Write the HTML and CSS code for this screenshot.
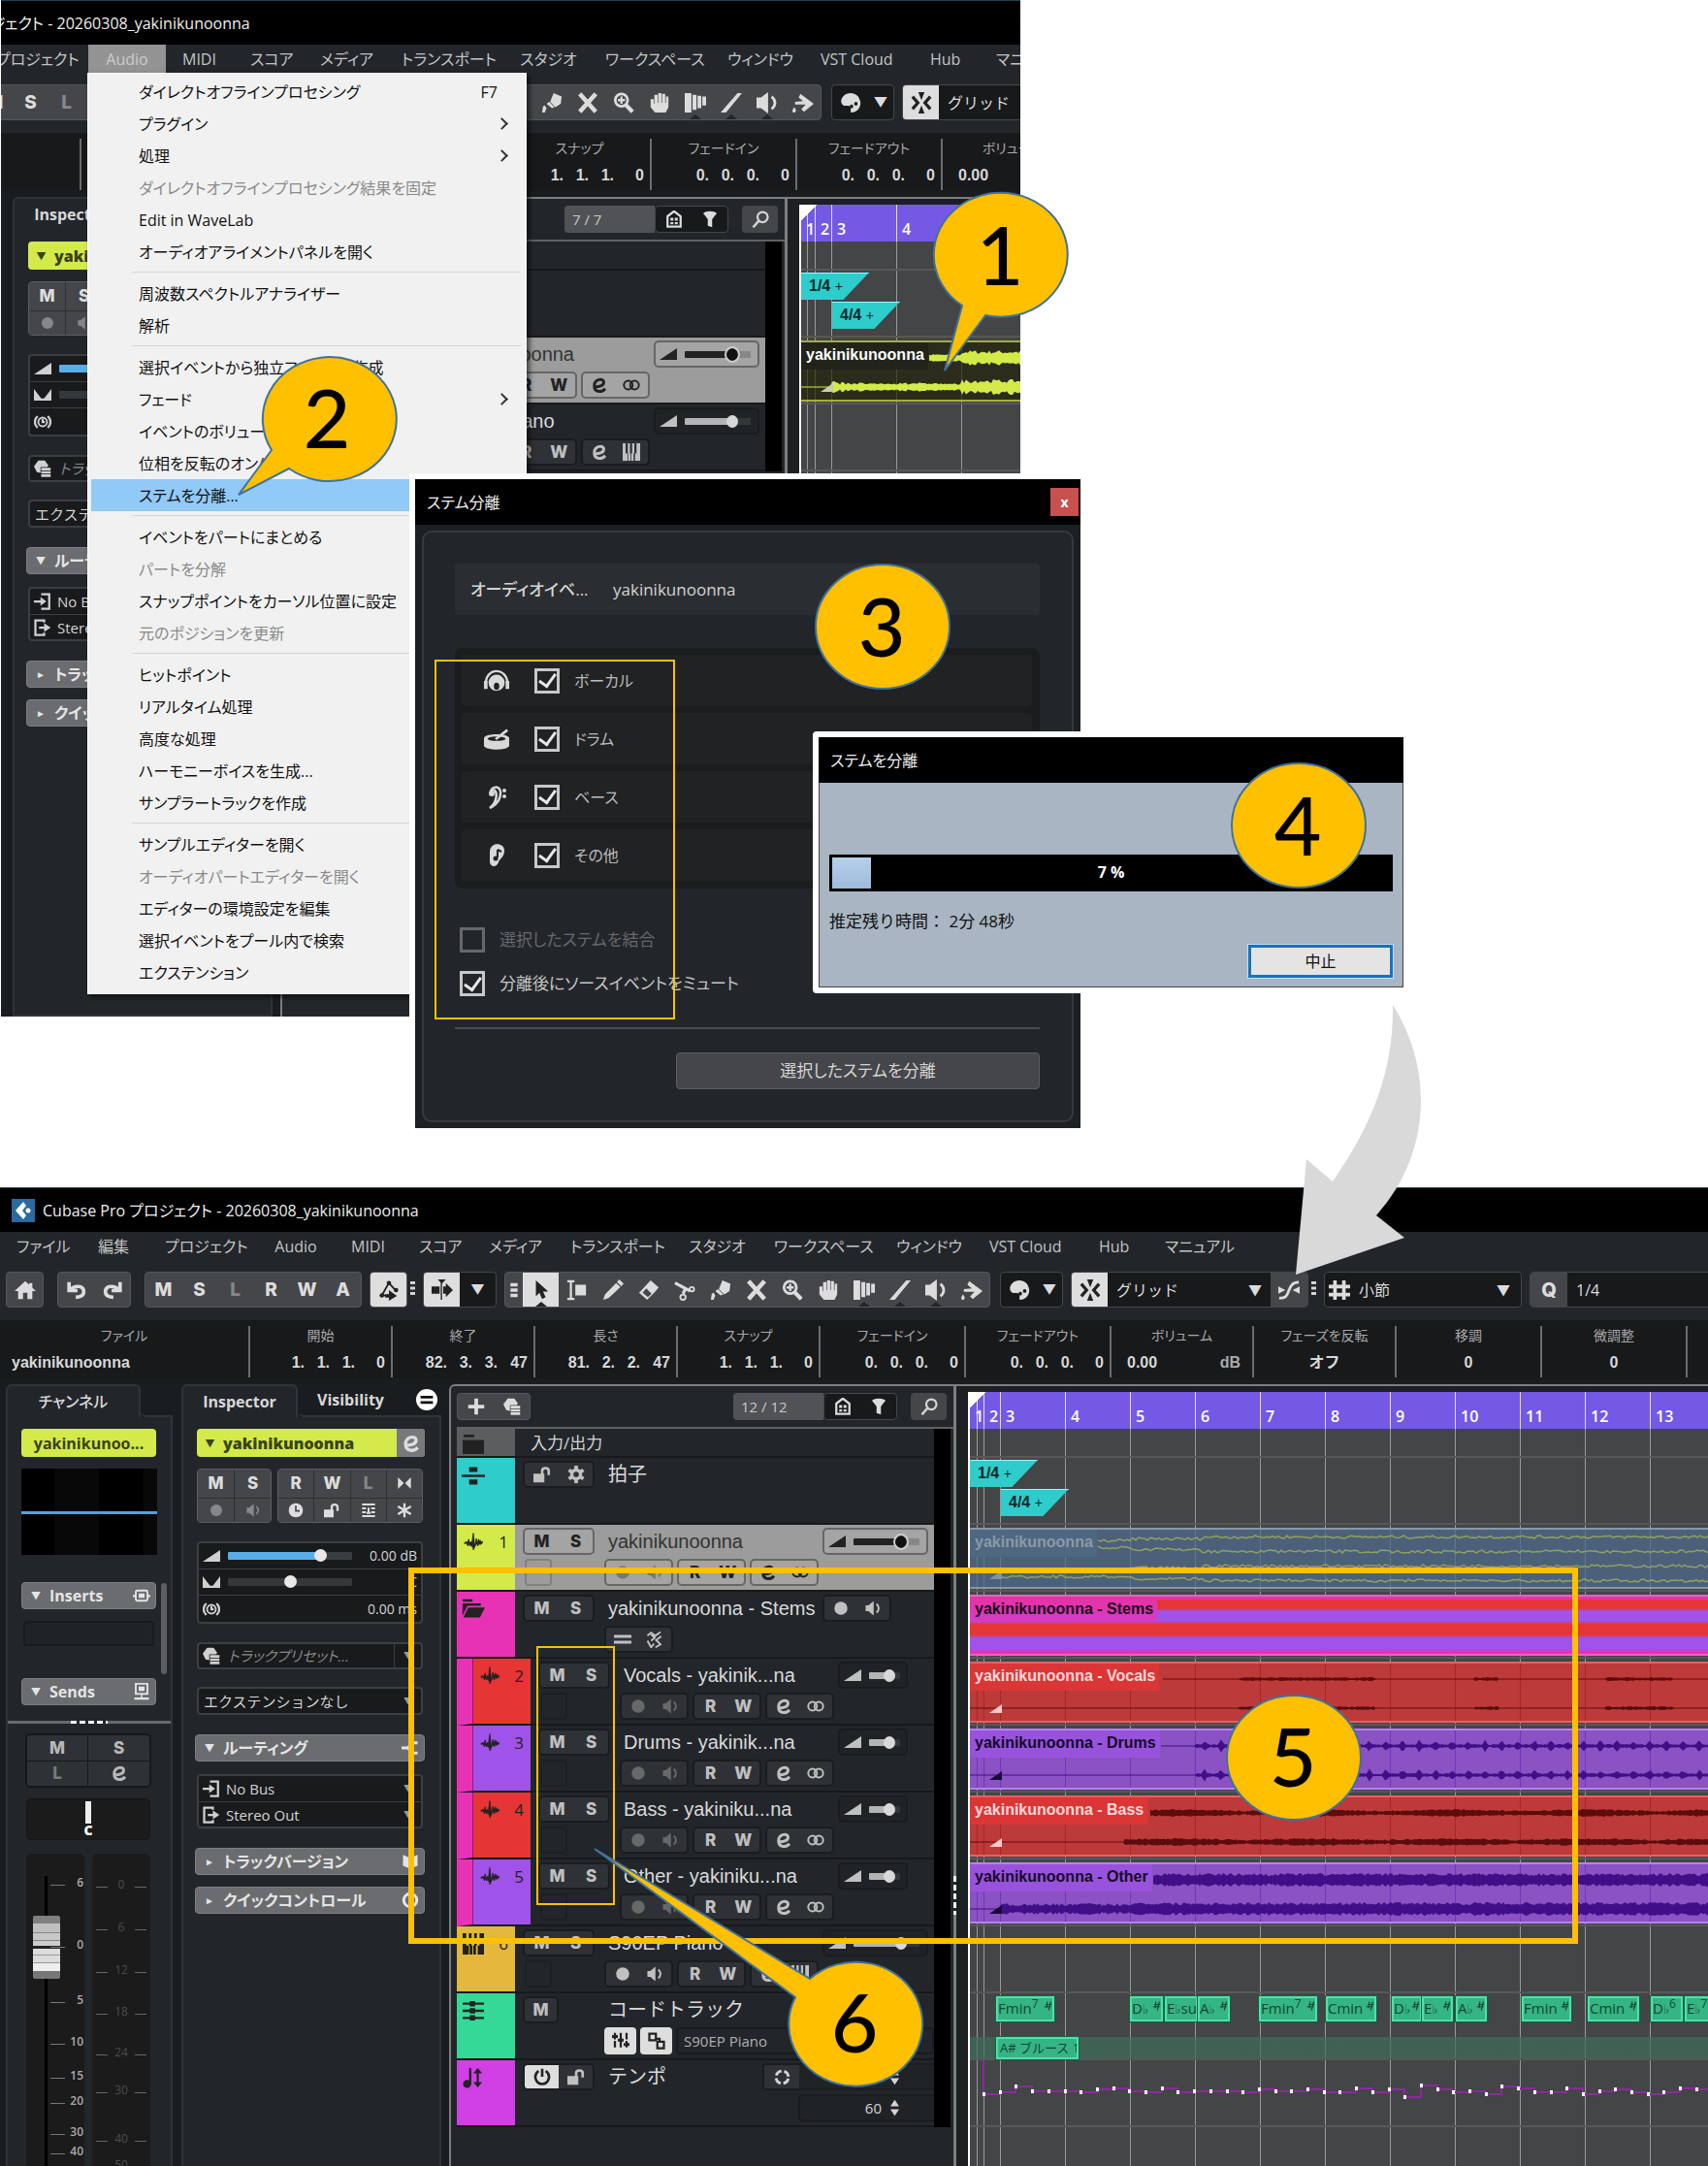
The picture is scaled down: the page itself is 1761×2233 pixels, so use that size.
FILE: index.html
```html
<!DOCTYPE html>
<html lang="ja">
<head>
<meta charset="utf-8">
<title>ステム分離の手順</title>
<link rel="stylesheet" href="styles.css">
<script src="app.js" defer></script>
</head>
<body>
<svg class="defs" aria-hidden="true">
<symbol id="home" viewBox="0 0 24 24"><path d="M12 2 0 13h4v9h5.500v-7h5v7H20v-9h4l-4-3.700V4h-3.500v2z"/></symbol>
<symbol id="undo" viewBox="0 0 24 24"><path d="M3.500 3v9.500H13M5 12C8 7 20 5.500 20 14c0 4-3.500 6-9 6" fill="none" stroke="currentColor" stroke-width="4"/></symbol>
<symbol id="redo" viewBox="0 0 24 24"><path d="M20.500 3v9.500H11M19 12C16 7 4 5.500 4 14c0 4 3.500 6 9 6" fill="none" stroke="currentColor" stroke-width="4"/></symbol>
<symbol id="autom" viewBox="0 0 24 24"><path d="M4 18 12 4l8 9M4 18h7" fill="none" stroke="currentColor" stroke-width="2"/><path d="M12 12l9 6.500-9 5.500v-3.500H8v-4h4z"/><circle cx="12" cy="4" r="2.500"/><circle cx="4" cy="18" r="2.500"/><circle cx="20" cy="12" r="2.500"/></symbol>
<symbol id="scroll" viewBox="0 0 24 24"><path d="M0 8h9v8H0zM13 8h3V4l8 8-8 8v-4h-3zM7 0h9l-4.500 5z"/><path d="M11 3v20" stroke="currentColor" stroke-width="1.500"/></symbol>
<symbol id="dots" viewBox="0 0 6 24"><path d="M0 4h5v3H0zM0 9.500h5v3H0zM0 15h5v3H0z"/></symbol>
<symbol id="grips" viewBox="0 0 10 24"><path d="M1 4h8v4H1zM1 10h8v4H1zM1 16h8v4H1z"/></symbol>
<symbol id="arrow" viewBox="0 0 24 24"><path d="M6 1v18l4-4 3 7 4-2-3-6.500h6z"/></symbol>
<symbol id="range" viewBox="0 0 24 24"><path d="M1 2h8M1 22h8M5 2v20" stroke="currentColor" stroke-width="2.500"/><path d="M10 6h12v12H10z"/></symbol>
<symbol id="pencil" viewBox="0 0 24 24"><path d="M19 0l5 4.500-2.500 3-5-4.500zM15.500 4l5 4.500L7 21l-6 2 2-6z"/></symbol>
<symbol id="eraser" viewBox="0 0 24 24"><path d="M14 1l9 8-4 5-9 9-9-8z"/><path d="M9 10l6 6-4 4-6-5z" fill="#444649"/></symbol>
<symbol id="scissors" viewBox="0 0 24 24"><path d="M1 4l17 9M13 10l-3 6" stroke="currentColor" stroke-width="3.500"/><circle cx="20" cy="11" r="2.500" fill="none" stroke="currentColor" stroke-width="2"/><circle cx="10" cy="20" r="3" fill="none" stroke="currentColor" stroke-width="2"/></symbol>
<symbol id="glue" viewBox="0 0 24 24"><path d="M14 1l9 4-1 8-6 4-6-6zM9 11l6 6-3 1-6-5zM1 23l1-7 2-1 2 3-2 5z"/></symbol>
<symbol id="cross" viewBox="0 0 24 24"><path d="M3 2l18 20M21 2L3 22" stroke="currentColor" stroke-width="5"/></symbol>
<symbol id="zoom" viewBox="0 0 24 24"><circle cx="9.500" cy="9" r="7" fill="none" stroke="currentColor" stroke-width="3"/><path d="M14 14l8 8" stroke="currentColor" stroke-width="4.500"/><path d="M9.500 5v8M5.500 9h8" stroke="currentColor" stroke-width="2.500"/></symbol>
<symbol id="hand" viewBox="0 0 24 24"><path d="M2 8h3.500v5h.7V3h3.600v9h.7V1h3.600v11h.7V2h3.600v10h.7V5H22v12l-3 6H7l-5-6z"/></symbol>
<symbol id="comp" viewBox="0 0 24 24"><path d="M0 1h7.500v22H0zM8.800 3h4.400v17H8.800zM14.400 4h4.200v14h-4.200zM19.800 5H24v10h-4.200z"/></symbol>
<symbol id="line" viewBox="0 0 24 24"><path d="M19 1h5L6 23H0z"/></symbol>
<symbol id="speaker" viewBox="0 0 24 24"><path d="M0 6h5l8-6v24l-8-6H0z"/><path d="M17 5c5 4 5 10 0 14" fill="none" stroke="currentColor" stroke-width="3"/></symbol>
<symbol id="paint" viewBox="0 0 24 24"><path d="M9 2l15 11-11 9-3-3 5-5H3v-3l9-1-5-4zM2 17c3 3 2 6 0 6s-3-2 0-6z"/></symbol>
<symbol id="palette" viewBox="0 0 24 24"><path d="M12 1C3 1-2 11 4 15c3 1 6-1 8 2 1 3-1 5 1 6 6 0 11-6 10-12C22 5 18 1 12 1z"/><circle cx="13" cy="16" r="2" fill="#17191b"/><circle cx="18" cy="13" r="2" fill="#17191b"/></symbol>
<symbol id="snap" viewBox="0 0 24 24"><path d="M2 5l6 7-6 7M22 5l-6 7 6 7" fill="none" stroke="currentColor" stroke-width="3.500"/><path d="M8.500 0h7L12 9zM8.500 24h7L12 15z"/></symbol>
<symbol id="zero" viewBox="0 0 24 24"><path d="M1 21c9 0 9-4 11-9s4-9 11-9" fill="none" stroke="currentColor" stroke-width="3"/><path d="M0 8l8 4-8 4zM24 8l-8 4 8 4z"/></symbol>
<symbol id="hash" viewBox="0 0 24 24"><path d="M7 1v22M17 1v22M0 8h24M0 17h24" stroke="currentColor" stroke-width="4"/></symbol>
<symbol id="menu" viewBox="0 0 24 24"><circle cx="12" cy="12" r="12" fill="#fff"/><path d="M5 9h14M5 15h14" stroke="#111" stroke-width="3"/></symbol>
<symbol id="e" viewBox="0 0 24 24"><path d="M4 14c7 1 14-1 14-6 0-6-13-5-13 5 0 10 11 9 15 4" fill="none" stroke="currentColor" stroke-width="4"/></symbol>
<symbol id="rec" viewBox="0 0 24 24"><circle cx="12" cy="12" r="9"/></symbol>
<symbol id="mon" viewBox="0 0 24 24"><path d="M2 8h4l7-6v20l-7-6H2z"/><path d="M17 6c4 4 4 8 0 12" fill="none" stroke="currentColor" stroke-width="2.500"/></symbol>
<symbol id="bow" viewBox="0 0 24 24"><path d="M2 3l9 9-9 9zM22 3l-9 9 9 9z"/></symbol>
<symbol id="clock" viewBox="0 0 24 24"><circle cx="12" cy="12" r="11"/><path d="M12 5v8h6" fill="none" stroke="#444649" stroke-width="2.500"/></symbol>
<symbol id="lock" viewBox="0 0 24 24"><path d="M0 11h15v12H0z"/><path d="M12 12V7c0-5 9-5 9 0v6" fill="none" stroke="currentColor" stroke-width="3.500"/></symbol>
<symbol id="lanes" viewBox="0 0 24 24"><path d="M2 3h20M2 9h6M16 9h6M2 15h6M16 15h6M2 21h20M12 8v9M9 16h6" stroke="currentColor" stroke-width="3"/></symbol>
<symbol id="star" viewBox="0 0 24 24"><path d="M12 1v22M2 6l20 12M22 6L2 18" stroke="currentColor" stroke-width="3.500"/></symbol>
<symbol id="ramp" viewBox="0 0 24 16"><path d="M0 16 24 0v16z"/></symbol>
<symbol id="pan" viewBox="0 0 24 16"><path d="M0 0l10 13h4L24 0v16H0z"/></symbol>
<symbol id="delay" viewBox="0 0 24 24"><circle cx="12" cy="12" r="6" fill="none" stroke="currentColor" stroke-width="2.500"/><path d="M12 8v4h3M5 4c-5 5-5 11 0 16M19 4c5 5 5 11 0 16" fill="none" stroke="currentColor" stroke-width="3"/></symbol>
<symbol id="preset" viewBox="0 0 24 24"><path d="M6 1h9l5 7-2 2H9v8L4 17 0 9z"/><path d="M10 11h13v3.500H10zM10 15.500h13V19H10zM10 20h13v3.500H10z"/></symbol>
<symbol id="insert" viewBox="0 0 24 24"><rect x="4" y="5" width="16" height="14" rx="2" fill="none" stroke="currentColor" stroke-width="2.500"/><path d="M8 9h8v6H8zM0 11h4v3H0zM20 11h4v3h-4z"/></symbol>
<symbol id="send" viewBox="0 0 24 24"><rect x="4" y="1" width="16" height="14" fill="none" stroke="currentColor" stroke-width="2.500"/><path d="M8 5h8v6H8zM11 15h2v6h-2zM2 20h20v3H2z"/></symbol>
<symbol id="route" viewBox="0 0 24 24"><path d="M0 12h8M22 5h-8L9 12l5 7h8" fill="none" stroke="currentColor" stroke-width="4"/></symbol>
<symbol id="in" viewBox="0 0 24 24"><path d="M10 2h11v20H10M0 12h11" fill="none" stroke="currentColor" stroke-width="3"/><path d="M9 6l8 6-8 6z"/></symbol>
<symbol id="out" viewBox="0 0 24 24"><path d="M14 5V2H2v20h12v-3M7 12h8" fill="none" stroke="currentColor" stroke-width="3"/><path d="M14 6l9 6-9 6z"/></symbol>
<symbol id="plus" viewBox="0 0 24 24"><path d="M12 1v22M1 12h22" stroke="currentColor" stroke-width="5"/></symbol>
<symbol id="cage" viewBox="0 0 24 24"><path d="M3 8l9-7 9 7v14H3z" fill="none" stroke="currentColor" stroke-width="3"/><path d="M7 10h4v4H7zM13 10h4v4h-4zM7 16h4v3H7zM13 16h4v3h-4z"/></symbol>
<symbol id="funnel" viewBox="0 0 24 24"><path d="M3 4l6 8v9l6 2V12l6-8z"/><ellipse cx="12" cy="4" rx="9" ry="3"/></symbol>
<symbol id="search" viewBox="0 0 24 24"><circle cx="15" cy="9" r="7" fill="none" stroke="currentColor" stroke-width="3"/><path d="M10 14l-8 9" stroke="currentColor" stroke-width="3.500"/></symbol>
<symbol id="folder" viewBox="0 0 24 24"><path d="M1 1h12v3H1zM0 7h24v16H0z"/></symbol>
<symbol id="ofolder" viewBox="0 0 28 24"><path d="M1 0h12v3H1zM1 5h22v3H7L1 20zM8 10h20l-6 12H2z"/></symbol>
<symbol id="sig" viewBox="0 0 28 24"><path d="M9 2h10v6H9zM0 11h28v3H0zM9 17h10v6H9z"/></symbol>
<symbol id="wave" viewBox="-1 -2 26 28"><path d="M0 13l3-2 1 2 2-5 1 5 2-2 1 3 2-14 2 17 2-10 1 6 2-5 1 4 1-3 1 3 2-1v2l-3 2-2-1-1 3-2-4-1 3-2 4-1 2-1-7-1 3-1-3-1 2-2-3-1 3-2-4-2 1z" stroke="currentColor"/></symbol>
<symbol id="keys" viewBox="0 0 24 24"><path d="M0 0h4v14h3v10H0zM7 0h3v14h1v10H8V14H7zM13 0h3v14h-1v10h-3V14h1zM19 0h5v24h-7V14h2z"/></symbol>
<symbol id="chord" viewBox="0 0 24 24"><path d="M0 4h24M0 12h24M0 20h24" stroke="currentColor" stroke-width="2.500"/><path d="M8 1h6v6H8zM8 9h6v6H8zM8 17h6v6H8z"/></symbol>
<symbol id="tempo" viewBox="0 0 24 24"><circle cx="5" cy="19" r="4.500"/><path d="M8.500 1v18M17 4v16" stroke="currentColor" stroke-width="2.500"/><path d="M12 7l5-6 5 6zM12 17h10l-5 6z"/></symbol>
<symbol id="gear" viewBox="0 0 24 24"><circle cx="12" cy="12" r="6" fill="none" stroke="currentColor" stroke-width="4.500"/><path d="M12 0v5M12 19v5M2 6l4 2.500M18 15.500l4 2.500M22 6l-4 2.500M6 15.500L2 18" stroke="currentColor" stroke-width="5"/></symbol>
<symbol id="rings" viewBox="0 0 28 24"><circle cx="9" cy="12" r="7" fill="none" stroke="currentColor" stroke-width="3"/><circle cx="19" cy="12" r="7" fill="none" stroke="currentColor" stroke-width="3"/></symbol>
<symbol id="eq" viewBox="0 0 24 24"><path d="M0 6h24v4H0zM0 14h24v4H0z"/></symbol>
<symbol id="zig" viewBox="0 0 24 24"><path d="M2 7l5-4 6 4 7-5M7 14l5-4-5-5M2 14l5 9 4-5M13 23l7-4-6-6 7-5" fill="none" stroke="currentColor" stroke-width="2.500"/></symbol>
<symbol id="mixer" viewBox="0 0 24 24"><path d="M4 1v22M12 1v22M20 1v22" stroke="currentColor" stroke-width="3" stroke-dasharray="9 2"/><path d="M0 4h8v4H0zM8 9h8v4H8zM16 15h8v4h-8z"/></symbol>
<symbol id="link" viewBox="0 0 24 24"><path d="M2 2h9v9H2zM13 13h9v9h-9zM11 9h5v5" fill="none" stroke="currentColor" stroke-width="3"/></symbol>
<symbol id="power" viewBox="0 0 24 24"><path d="M7 4C-1 10 3 22 12 22S25 10 17 4M12 1v11" fill="none" stroke="currentColor" stroke-width="3.500"/></symbol>
<symbol id="target" viewBox="0 0 24 24"><circle cx="12" cy="12" r="9" fill="none" stroke="currentColor" stroke-width="4" stroke-dasharray="10 4.100" stroke-dashoffset="-2"/></symbol>
<symbol id="spin" viewBox="0 0 12 24"><path d="M6 1l6 9H0zM6 23l6-9H0z"/></symbol>
<symbol id="knob" viewBox="0 0 24 24"><circle cx="12" cy="12" r="9" fill="none" stroke="currentColor" stroke-width="4"/></symbol>
<symbol id="ver" viewBox="0 0 24 24"><path d="M2 3l7 3 3 12 3-12 7-3v15l-10 4L2 18z"/></symbol>
<symbol id="mouth" viewBox="0 0 28 24"><path d="M2 20v-7C4-3 24-3 26 13v7" fill="none" stroke="currentColor" stroke-width="2.500"/><path d="M0 12h4v9H0zM24 12h4v9h-4z"/><circle cx="14" cy="14" r="9"/><ellipse cx="14" cy="18" rx="3" ry="4" fill="#202224"/></symbol>
<symbol id="drum" viewBox="0 0 28 24"><path d="M0 11c0-6 28-6 28 0v8c0 6-28 6-28 0z"/><ellipse cx="14" cy="11.500" rx="10" ry="2.500" fill="#202224"/><path d="M13 12L26 2" stroke="currentColor" stroke-width="3"/></symbol>
<symbol id="bass" viewBox="0 0 24 24"><path d="M6 8C5 0 17-1 16 8c0 7-5 12-11 15C15 15 12 2 8 5" fill="none" stroke="currentColor" stroke-width="2.500"/><circle cx="7" cy="8" r="3"/><circle cx="20" cy="5" r="2"/><circle cx="20" cy="11" r="2"/></symbol>
<symbol id="ear" viewBox="0 0 24 24"><path d="M5 8C5-2 20-2 20 7c0 7-5 8-6 12-2 6-9 5-9-1z"/><path d="M13 6v8M13 6l4 2" stroke="#202224" stroke-width="2"/><circle cx="11" cy="15" r="2.500" fill="#202224"/></symbol>
<symbol id="logo" viewBox="0 0 24 24"><path d="M0 0h24v24H0z" fill="#2a6aa0"/><path d="M12 3 4 12l8 9 3-4-4-5 4-5z" fill="#fff"/><circle cx="17" cy="12" r="2.500" fill="#fff"/></symbol>
<symbol id="ped" viewBox="0 0 12 12"><path d="M1 7h9M3 4h8M5 0L4 9M10 0L7 12" stroke="currentColor" stroke-width="1.500"/></symbol>
</svg>

<main class="board">

<section class="capture" aria-label="プロジェクトウィンドウ Audio メニュー">
 <div class="app shifted">
  <header class="titlebar"><svg class="i"><use href="#logo"/></svg><h1>Cubase Pro プロジェクト - 20260308_yakinikunoonna</h1></header>
  <div data-copy="menubar"></div>
  <div data-copy="toolbar"></div>
  <div data-copy="infobar"></div>
  <div class="workspace">
   <div class="panel channel"></div>
   <div data-copy="inspector"></div>
   <section class="tracks">
    <div class="tracks-head"><span class="count">7 / 7</span><div class="group dark"><button aria-label="可視性"><svg class="i"><use href="#cage"/></svg></button><button aria-label="フィルター"><svg class="i"><use href="#funnel"/></svg></button></div><button class="find" aria-label="検索"><svg class="i"><use href="#search"/></svg></button></div>
    <div class="rows">
     <div class="track io"><div class="tag c-gray"></div></div>
     <div class="track"><div class="tag c-cyan"></div></div>
     <div class="track selected"><div class="tag c-lime"></div><div class="ctl">
      <div class="l1"><span class="sp-ms"></span><span class="name">yakinikunoonna</span><div class="vol"><svg class="i"><use href="#ramp"/></svg><input type="range" value="76" aria-label="音量"></div></div>
      <div class="l2"><span class="sp-pic"></span><span class="sp-g"></span><div class="group"><button>R</button><button>W</button></div><div class="group"><button aria-label="編集"><svg class="i"><use href="#e"/></svg></button><button aria-label="チャンネル構成"><svg class="i"><use href="#rings"/></svg></button></div></div>
     </div></div>
     <div class="track"><div class="tag c-gold"></div><div class="ctl">
      <div class="l1"><span class="sp-ms"></span><span class="name">S90EP Piano</span><div class="vol"><svg class="i"><use href="#ramp"/></svg><input type="range" value="76" aria-label="音量"></div></div>
      <div class="l2"><span class="sp-pic"></span><span class="sp-g"></span><div class="group"><button>R</button><button>W</button></div><div class="group"><button aria-label="編集"><svg class="i"><use href="#e"/></svg></button><button aria-label="鍵盤"><svg class="i"><use href="#keys"/></svg></button></div></div>
     </div></div>
    </div>
   </section>
   <section class="timeline">
    <div class="ruler"><b class="b1">1</b><b class="b2">2</b><b>3</b><b>4</b></div>
    <div class="lanes">
     <div class="lane io"></div>
     <div class="lane"><span class="sig s1">1/4 <i>+</i></span><span class="sig s2">4/4 <i>+</i></span></div>
     <div class="lane"><div class="event original"><span>yakinikunoonna</span><svg data-wave="full" data-from="132"></svg></div></div>
     <div class="lane"></div><div class="lane"></div>
    </div>
   </section>
  </div>
 </div>

 <div class="dropdown" role="menu">
  <button>ダイレクトオフラインプロセシング<kbd>F7</kbd></button>
  <button class="sub">プラグイン</button>
  <button class="sub">処理</button>
  <button disabled>ダイレクトオフラインプロセシング結果を固定</button>
  <button>Edit in WaveLab</button>
  <button>オーディオアライメントパネルを開く</button>
  <hr>
  <button>周波数スペクトルアナライザー</button>
  <button>解析</button>
  <hr>
  <button>選択イベントから独立ファイルを作成</button>
  <button class="sub">フェード</button>
  <button>イベントのボリューム</button>
  <button>位相を反転のオン/オフ</button>
  <button class="on">ステムを分離...</button>
  <hr>
  <button>イベントをパートにまとめる</button>
  <button disabled>パートを分解</button>
  <button>スナップポイントをカーソル位置に設定</button>
  <button disabled>元のポジションを更新</button>
  <hr>
  <button>ヒットポイント</button>
  <button>リアルタイム処理</button>
  <button>高度な処理</button>
  <button>ハーモニーボイスを生成...</button>
  <button>サンプラートラックを作成</button>
  <hr>
  <button>サンプルエディターを開く</button>
  <button disabled>オーディオパートエディターを開く</button>
  <button>エディターの環境設定を編集</button>
  <button>選択イベントをプール内で検索</button>
  <button>エクステンション</button>
 </div>
</section>

<section class="dialog stems" aria-label="ステム分離">
 <header><h2>ステム分離</h2><button class="close" aria-label="閉じる">x</button></header>
 <form class="stems-body">
  <div class="field"><b>オーディオイベ...</b><span>yakinikunoonna</span></div>
  <div class="list">
   <label><svg class="i"><use href="#mouth"/></svg><input type="checkbox" checked>ボーカル</label>
   <label><svg class="i"><use href="#drum"/></svg><input type="checkbox" checked>ドラム</label>
   <label><svg class="i"><use href="#bass"/></svg><input type="checkbox" checked>ベース</label>
   <label><svg class="i"><use href="#ear"/></svg><input type="checkbox" checked>その他</label>
  </div>
  <div class="opts">
   <label class="off"><input type="checkbox" disabled>選択したステムを結合</label>
   <label><input type="checkbox" checked>分離後にソースイベントをミュート</label>
  </div>
  <hr>
  <button type="button" class="go">選択したステムを分離</button>
 </form>
</section>

<section class="dialog busy" aria-label="ステムを分離">
 <header><h2>ステムを分離</h2></header>
 <div class="busy-body">
  <div class="bar"><progress id="prog" max="100" value="7" aria-label="進行状況"></progress><span>7 %</span></div>
  <p>推定残り時間： 2分 48秒</p>
  <button>中止</button>
 </div>
</section>

<section class="app result" aria-label="ステム分離後のプロジェクト">
 <header class="titlebar"><svg class="i"><use href="#logo"/></svg><h1>Cubase Pro プロジェクト - 20260308_yakinikunoonna</h1></header>
 <nav class="menubar"><button>ファイル</button><button>編集</button><button>プロジェクト</button><button class="audio">Audio</button><button>MIDI</button><button>スコア</button><button>メディア</button><button>トランスポート</button><button>スタジオ</button><button>ワークスペース</button><button>ウィンドウ</button><button>VST Cloud</button><button>Hub</button><button>マニュアル</button></nav>
 <div class="toolbar">
  <div class="group"><button aria-label="ホーム"><svg class="i"><use href="#home"/></svg></button></div>
  <div class="group g2"><button aria-label="元に戻す"><svg class="i"><use href="#undo"/></svg></button><button aria-label="やり直し"><svg class="i"><use href="#redo"/></svg></button></div>
  <div class="group g2"><button>M</button><button>S</button><button class="dim">L</button><button>R</button><button>W</button><button>A</button></div>
  <div class="group"><button class="lit" aria-label="オートメーション"><svg class="i"><use href="#autom"/></svg></button></div>
  <svg class="i grip"><use href="#dots"/></svg>
  <div class="group dark"><button class="lit" aria-label="オートスクロール"><svg class="i"><use href="#scroll"/></svg></button><button aria-label="スクロール設定">▼</button></div>
  <div class="group tools"><svg class="i grips"><use href="#grips"/></svg><button class="lit notch" aria-label="選択"><svg class="i"><use href="#arrow"/></svg></button><button aria-label="範囲"><svg class="i"><use href="#range"/></svg></button><button aria-label="鉛筆"><svg class="i"><use href="#pencil"/></svg></button><button aria-label="消しゴム"><svg class="i"><use href="#eraser"/></svg></button><button aria-label="はさみ"><svg class="i"><use href="#scissors"/></svg></button><button aria-label="のり"><svg class="i"><use href="#glue"/></svg></button><button aria-label="ミュート"><svg class="i"><use href="#cross"/></svg></button><button aria-label="ズーム"><svg class="i"><use href="#zoom"/></svg></button><button aria-label="手のひら"><svg class="i"><use href="#hand"/></svg></button><button class="notch" aria-label="コンプ"><svg class="i"><use href="#comp"/></svg></button><button class="notch" aria-label="ライン"><svg class="i"><use href="#line"/></svg></button><button class="notch" aria-label="試聴"><svg class="i"><use href="#speaker"/></svg></button><button aria-label="カラー"><svg class="i"><use href="#paint"/></svg></button></div>
  <div class="group dark pal"><button aria-label="カラーパレット"><svg class="i"><use href="#palette"/></svg></button><button class="tiny" aria-label="カラー一覧">▼</button></div>
  <div class="group dark"><button class="lit" aria-label="スナップ"><svg class="i"><use href="#snap"/></svg></button><span class="sel wide"><select aria-label="スナップタイプ"><option>グリッド</option></select></span><button class="mid" aria-label="ゼロクロス"><svg class="i"><use href="#zero"/></svg></button></div>
  <svg class="i grip"><use href="#dots"/></svg>
  <div class="group dark beat"><svg class="i"><use href="#hash"/></svg><span class="sel wide"><select aria-label="グリッドの種類"><option>小節</option></select></span></div>
  <div class="group dark"><button class="mid">Q</button><span class="sel wide"><select aria-label="クオンタイズ"><option>1/4</option></select></span></div>
 </div>
 <dl class="infobar">
  <div class="file"><dt>ファイル</dt><dd>yakinikunoonna</dd></div>
  <div><dt>開始</dt><dd class="pos"><i>1.</i><i>1.</i><i>1.</i><i>0</i></dd></div>
  <div><dt>終了</dt><dd class="pos"><i>82.</i><i>3.</i><i>3.</i><i>47</i></dd></div>
  <div><dt>長さ</dt><dd class="pos"><i>81.</i><i>2.</i><i>2.</i><i>47</i></dd></div>
  <div><dt>スナップ</dt><dd class="pos"><i>1.</i><i>1.</i><i>1.</i><i>0</i></dd></div>
  <div><dt>フェードイン</dt><dd class="pos"><i>0.</i><i>0.</i><i>0.</i><i>0</i></dd></div>
  <div><dt>フェードアウト</dt><dd class="pos"><i>0.</i><i>0.</i><i>0.</i><i>0</i></dd></div>
  <div><dt>ボリューム</dt><dd class="split"><span>0.00</span><span>dB</span></dd></div>
  <div><dt>フェーズを反転</dt><dd>オフ</dd></div>
  <div><dt>移調</dt><dd>0</dd></div>
  <div><dt>微調整</dt><dd>0</dd></div>
 </dl>
 <div class="workspace">
  <section class="panel channel">
   <div class="tabs"><button class="tab on">チャンネル</button><span class="rest"></span></div>
   <div class="panel-body">
    <div class="scrolling">
     <button class="chip">yakinikunoo...</button>
     <div class="eqview"></div>
     <div class="bar-head"><button>▼</button><b>Inserts</b><svg class="i"><use href="#insert"/></svg></div>
     <div class="slot"></div>
     <div class="bar-head"><button>▼</button><b>Sends</b><svg class="i"><use href="#send"/></svg></div>
    </div>
    <div class="splitter"><i></i></div>
    <div class="msle"><button>M</button><button>S</button><button class="dim">L</button><button aria-label="編集"><svg class="i"><use href="#e"/></svg></button></div>
    <div class="panbox"><i></i><b>C</b></div>
    <div class="faders">
     <div class="fader"><input type="range" value="84" aria-label="フェーダー">
      <span style="top:31px">6</span><span style="top:95px">0</span><span style="top:152px">5</span><span style="top:195px">10</span><span style="top:230px">15</span><span style="top:256px">20</span><span style="top:288px">30</span><span style="top:308px">40</span>
     </div>
     <div class="fader meter"><span style="top:33px">0</span><span style="top:77px">6</span><span style="top:121px">12</span><span style="top:164px">18</span><span style="top:206px">24</span><span style="top:245px">30</span><span style="top:295px">40</span><span style="top:322px">50</span></div>
    </div>
   </div>
  </section>

  <section class="panel inspector">
   <div class="tabs"><button class="tab on">Inspector</button><span class="rest"><button>Visibility</button><svg class="i"><use href="#menu"/></svg></span></div>
   <div class="panel-body">
    <div class="chip wide"><button>▼</button><b>yakinikunoonna</b><button class="edit" aria-label="編集"><svg class="i"><use href="#e"/></svg></button></div>
    <div class="pads">
     <div class="pad p2"><button>M</button><button>S</button><button class="dim" aria-label="録音"><svg class="i"><use href="#rec"/></svg></button><button class="dim" aria-label="モニター"><svg class="i"><use href="#mon"/></svg></button></div>
     <div class="pad p4"><button>R</button><button>W</button><button class="dim">L</button><button aria-label="位相"><svg class="i"><use href="#bow"/></svg></button><button aria-label="タイムベース"><svg class="i"><use href="#clock"/></svg></button><button aria-label="ロック"><svg class="i"><use href="#lock"/></svg></button><button aria-label="レーン"><svg class="i"><use href="#lanes"/></svg></button><button aria-label="フリーズ"><svg class="i"><use href="#star"/></svg></button></div>
    </div>
    <div class="box values">
     <div><svg class="i"><use href="#ramp"/></svg><input class="blue" type="range" value="77" aria-label="音量"><span>0.00 dB</span></div>
     <div><svg class="i"><use href="#pan"/></svg><input class="flat" type="range" value="50" aria-label="パン"><span>C</span></div>
     <div><svg class="i"><use href="#delay"/></svg><span>0.00 ms</span></div>
    </div>
    <div class="box preset"><svg class="i"><use href="#preset"/></svg><em>トラックプリセット...</em><button aria-label="プリセット一覧">▼</button></div>
    <div class="box ext"><span class="sel"><select aria-label="エクステンション"><option>エクステンションなし</option></select></span></div>
    <div class="bar-head"><button>▼</button><b>ルーティング</b><svg class="i"><use href="#route"/></svg></div>
    <div class="box bus"><div><svg class="i"><use href="#in"/></svg><span class="sel"><select aria-label="入力"><option>No Bus</option></select></span></div><div><svg class="i"><use href="#out"/></svg><span class="sel"><select aria-label="出力"><option>Stereo Out</option></select></span></div></div>
    <div class="bar-head"><button>►</button><b>トラックバージョン</b><svg class="i"><use href="#ver"/></svg></div>
    <div class="bar-head last"><button>►</button><b>クイックコントロール</b><svg class="i"><use href="#knob"/></svg></div>
   </div>
  </section>

  <section class="tracks">
   <div class="tracks-head"><div class="group add"><button aria-label="追加"><svg class="i"><use href="#plus"/></svg></button><button aria-label="プリセット"><svg class="i"><use href="#preset"/></svg></button></div><span class="count">12 / 12</span><div class="group dark"><button aria-label="可視性"><svg class="i"><use href="#cage"/></svg></button><button aria-label="フィルター"><svg class="i"><use href="#funnel"/></svg></button></div><button class="find" aria-label="検索"><svg class="i"><use href="#search"/></svg></button></div>
   <div class="rows">
    <div class="track io"><div class="tag c-gray"><svg class="i"><use href="#folder"/></svg></div><div class="ctl"><span class="ioname">入力/出力</span></div></div>
    <div class="track"><div class="tag c-cyan"><svg class="i"><use href="#sig"/></svg></div><div class="ctl"><div class="l1"><div class="group g74"><button aria-label="ロック"><svg class="i"><use href="#lock"/></svg></button><button aria-label="設定"><svg class="i"><use href="#gear"/></svg></button></div><span class="name">拍子</span></div></div></div>
    <div class="track selected"><div class="tag c-lime"><svg class="i"><use href="#wave"/></svg>1</div><div class="ctl">
     <div class="l1"><div class="group g74"><button>M</button><button>S</button></div><span class="name">yakinikunoonna</span><div class="vol"><svg class="i"><use href="#ramp"/></svg><input type="range" value="76" aria-label="音量"></div></div>
     <div class="l2"><span class="pic"></span><div class="group dim"><button aria-label="録音"><svg class="i"><use href="#rec"/></svg></button><button aria-label="モニター"><svg class="i"><use href="#mon"/></svg></button></div><div class="group"><button>R</button><button>W</button></div><div class="group"><button aria-label="編集"><svg class="i"><use href="#e"/></svg></button><button aria-label="チャンネル構成"><svg class="i"><use href="#rings"/></svg></button></div></div>
    </div></div>
    <div class="track"><div class="tag c-pink"><svg class="i"><use href="#ofolder"/></svg></div><div class="ctl">
     <div class="l1"><div class="group g74"><button>M</button><button>S</button></div><span class="name">yakinikunoonna - Stems</span><div class="group g71"><button aria-label="録音"><svg class="i"><use href="#rec"/></svg></button><button aria-label="モニター"><svg class="i"><use href="#mon"/></svg></button></div></div>
     <div class="l2"><span class="sp-pic"></span><div class="group"><button aria-label="グループ"><svg class="i"><use href="#eq"/></svg></button><button aria-label="フェーズ"><svg class="i"><use href="#zig"/></svg></button></div></div>
    </div></div>
    <div class="track child" data-name="Vocals - yakinik...na" data-no="2" data-color="c-red"></div>
    <div class="track child" data-name="Drums - yakinik...na" data-no="3" data-color="c-violet"></div>
    <div class="track child" data-name="Bass - yakiniku...na" data-no="4" data-color="c-red"></div>
    <div class="track child" data-name="Other - yakiniku...na" data-no="5" data-color="c-violet"></div>
    <div class="track"><div class="tag c-gold"><svg class="i"><use href="#keys"/></svg>6</div><div class="ctl">
     <div class="l1"><div class="group g74"><button>M</button><button>S</button></div><span class="name">S90EP Piano</span><div class="vol"><svg class="i"><use href="#ramp"/></svg><input type="range" value="76" aria-label="音量"></div></div>
     <div class="l2"><span class="pic"></span><div class="group"><button aria-label="録音"><svg class="i"><use href="#rec"/></svg></button><button aria-label="モニター"><svg class="i"><use href="#mon"/></svg></button></div><div class="group"><button>R</button><button>W</button></div><div class="group"><button aria-label="編集"><svg class="i"><use href="#e"/></svg></button><button aria-label="鍵盤"><svg class="i"><use href="#keys"/></svg></button></div></div>
    </div></div>
    <div class="track"><div class="tag c-green"><svg class="i"><use href="#chord"/></svg></div><div class="ctl">
     <div class="l1"><span class="sp-one"><span class="group"><button>M</button></span></span><span class="name">コードトラック</span></div>
     <div class="l2"><span class="sp-pic"></span><button class="lit sq" aria-label="ボイシング"><svg class="i"><use href="#mixer"/></svg></button><button class="lit sq" aria-label="マッピング"><svg class="i"><use href="#link"/></svg></button><span class="target">S90EP Piano</span></div>
    </div></div>
    <div class="track"><div class="tag c-purple"><svg class="i"><use href="#tempo"/></svg></div><div class="ctl">
     <div class="l1"><div class="group g74"><button class="lit" aria-label="有効"><svg class="i"><use href="#power"/></svg></button><button aria-label="ロック"><svg class="i"><use href="#lock"/></svg></button></div><span class="name tname">テンポ</span><div class="tval"><button aria-label="記録"><svg class="i"><use href="#target"/></svg></button><span></span><svg class="i sp"><use href="#spin"/></svg></div></div>
     <div class="l2 end"><div class="tval low"><span>60</span><svg class="i sp"><use href="#spin"/></svg></div></div>
    </div></div>
   </div>
   <span class="grabber"></span>
  </section>

  <section class="timeline">
   <div class="ruler"><b class="b1">1</b><b class="b2">2</b><b>3</b><b>4</b><b>5</b><b>6</b><b>7</b><b>8</b><b>9</b><b>10</b><b>11</b><b>12</b><b>13</b></div>
   <div class="lanes">
    <div class="lane io"></div>
    <div class="lane"><span class="sig s1">1/4 <i>+</i></span><span class="sig s2">4/4 <i>+</i></span></div>
    <div class="lane"><div class="event muted"><span>yakinikunoonna</span><svg data-wave="outline" data-from="132"></svg></div></div>
    <div class="lane"><div class="event folder"><span>yakinikunoonna - Stems</span></div></div>
    <div class="lane"><div class="event red"><span>yakinikunoonna - Vocals</span><svg data-wave="vocals" data-from="199"></svg></div></div>
    <div class="lane"><div class="event violet"><span>yakinikunoonna - Drums</span><svg data-wave="drums" data-from="197"></svg></div></div>
    <div class="lane"><div class="event red"><span>yakinikunoonna - Bass</span><svg data-wave="bass" data-from="186"></svg></div></div>
    <div class="lane"><div class="event violet"><span>yakinikunoonna - Other</span><svg data-wave="other" data-from="189"></svg></div></div>
    <div class="lane"></div>
    <div class="lane chords" id="chords"></div>
    <div class="lane"><svg id="tempoline"></svg></div>
   </div>
  </section>
 </div>
</section>

<div class="frame f3"></div><div class="frame f5"></div><div class="frame f6"></div>
<svg class="notes" aria-hidden="true">
 <path class="flow" d="M1436 1036c42 66 40 154-17 217l29 23-112 38 11-119 27 23c42-60 63-116 62-182z"/>
 <path d="M992 315 974 382 1016 325A69 64 0 1 0 992 315z"/>
 <path d="M280 464 246 510 298 483A69 64 0 1 0 280 464z"/>
 <path d="M835 2040 613 1906 820 2059A69 64 0 1 0 835 2040z"/>
 <ellipse cx="910" cy="646" rx="69" ry="64"/><ellipse cx="1339" cy="851" rx="69" ry="64"/><ellipse cx="1334" cy="1812" rx="69" ry="64"/>
 <text x="1031" y="294">1</text><text x="337" y="462">2</text><text x="909" y="677">3</text><text x="1338" y="882">4</text><text x="1333" y="1842">5</text><text x="881" y="2116">6</text>
</svg>
</main>
</body>
</html>
```
FILE: styles.css
```css
*{box-sizing:border-box}
body{margin:0;background:#fff;font:16px/20px "Open Sans","Noto Sans CJK JP",sans-serif;font-feature-settings:"palt";color:#d4d4d4}
h1,h2,p,dl,dd,hr{margin:0}
h1,h2{font-size:16px;font-weight:400}
button,select,input{font:inherit;font-feature-settings:inherit;color:inherit;background:none;border:0;padding:0;margin:0}
button{display:flex;align-items:center;justify-content:center;white-space:nowrap}
i{font-style:normal}
.defs{position:absolute;width:0;height:0}
.i{width:22px;height:22px;fill:currentColor;flex:none}
.board{position:relative;min-height:100vh;display:flex;flex-direction:column;overflow:hidden}

/* project window */
.app{background:#22262a;display:flex;flex-direction:column}
.capture{position:relative;width:1052px;max-width:100%;height:1048px;margin-bottom:176px;overflow:hidden;flex:none}
.capture::before{content:"";position:absolute;inset:0 auto auto 0;width:1px;height:100%;background:#fff}
.shifted{margin-left:-174px;height:100%}
.result{flex:1}
.titlebar{height:46px;background:#000;border-top:1px solid #22404f;display:flex;align-items:center;gap:8px;padding-left:12px;color:#eee;flex:none}
.titlebar .i{width:24px;height:24px}
.menubar{height:30px;display:grid;grid-template-columns:84px 69px 95px 97px 70px 72px 84px 122px 88px 126px 96px 113px 68px 80px;padding-left:17px;color:#c4c4c4;flex:none}
.menubar button{justify-content:flex-start}
.menubar .audio{width:80px;justify-content:center}
.shifted .audio{background:#939393;color:#ccc}
.toolbar{height:61px;padding:11px 0 13px 6px;display:flex;flex:none;overflow:hidden}
.group{display:flex;align-items:center;background:#444649;border:1px solid #55575a;border-radius:4px;color:#dcdcdc;font:800 19px/20px Inter,sans-serif;flex:none;overflow:hidden}
.group button{width:37px;height:100%}
.toolbar .group{margin-right:8px}
.toolbar .group:nth-child(-n+2){margin-right:14px}
.dark{background:#17191b;border-color:#44474a}
.dark button{font-size:14px}
.dim,.group.dim{color:#85878a}
.lit{background:#dedede;color:#222}
.group .mid{background:#444649;font-size:20px;width:38px}
.grip{width:6px;height:36px;margin-right:7px;margin-left:-5px}
.tools .grips{width:10px;margin:0 4px}
.group .grips{color:#dcdcdc}
.toolbar .tools{margin-right:10px}
.notch{position:relative}
.notch::after{content:"";position:absolute;bottom:0;left:50%;margin-left:-6px;border:6px solid transparent;border-top:0;border-bottom:5px solid #22262a}
.pal .tiny{width:26px}
.beat{padding-left:4px;padding-right:2px}
.sel{position:relative;display:flex;align-items:center;font:16px/20px "Open Sans","Noto Sans CJK JP",sans-serif;flex:1}
.sel select{appearance:none;width:100%;outline:0}
.sel::after{content:"▼";position:absolute;right:9px;font-size:12px;pointer-events:none}
.sel.wide{width:168px;height:100%;flex:none;padding-left:9px}
.sel.wide::after{font-size:14px}
.beat .sel.wide{width:174px}

.infobar{height:60px;background:#17191b;display:grid;grid-template-columns:258px repeat(4,147px) 150px 150px 147px 147px 150px 150px 1fr;padding-top:6px;flex:none;overflow:hidden}
.infobar div{height:53px;border-right:2px solid #6b6d6f;text-align:center}
.infobar dt{font-size:14px;line-height:20px;color:#a8a8a8}
.infobar dd{font:bold 16px/20px "Liberation Sans","Noto Sans CJK JP",sans-serif;margin-top:8px;color:#d8d8d8}
.infobar .file dd{text-align:left;padding-left:12px}
.pos{display:flex;justify-content:flex-end;padding-right:6px}
.pos i{width:26px;text-align:right;white-space:nowrap}
.pos i:last-child{width:31px}
.infobar .split{display:flex;justify-content:space-between;padding:0 12px 0 16px}
.infobar .split span+span{color:#aaa}

.workspace{flex:1;display:flex;background:#1a1d1f;padding:6px 0 0 6px;overflow:hidden;min-height:812px}
.panel{flex:none;display:flex;flex-direction:column;font-size:16px}
.channel{width:172px;margin-right:9px}
.inspector{width:268px;margin-right:8px}
.tabs{display:flex;height:34px;flex:none;font-weight:700;color:#d8d8d8}
.tab{width:139px;border:2px solid #303438;border-bottom:0;border-radius:6px 6px 0 0;background:#22262a}
.channel .tab{font-weight:500}
.inspector .tab{width:120px}
.rest{flex:1;border-bottom:2px solid #303438;border-radius:0 0 0 6px;display:flex;align-items:center;justify-content:space-between;padding:0 4px 0 20px}
.panel-body{flex:1;background:#22262a;border:2px solid #303438;border-top:0;padding:12px 14px 0;display:flex;flex-direction:column}
.inspector .panel-body{padding:12px 16px 0 14px}
.chip{height:29px;width:139px;background:#d3ea4a;border-radius:4px;color:#3b4216;font-weight:700;flex:none;overflow:hidden}
.scrolling{position:relative}
.scrolling::after{content:"";position:absolute;left:144px;top:159px;width:6px;height:94px;background:#5c5e61;border-radius:3px}
.eqview{height:89px;margin:12px 0 28px;width:140px;background:linear-gradient(#5aa0d0,#5aa0d0) 0 44px/100% 3px no-repeat,linear-gradient(90deg,#000 0 24%,#080809 24% 57%,#000 57% 90%,#080809 90%)}
.bar-head{height:28px;background:#6a6c6f;border:1px solid #7d7f82;border-radius:4px;display:flex;align-items:center;color:#e4e4e4;flex:none;width:139px}
.bar-head button{width:28px;font-size:10px}
.bar-head b{flex:1;font-weight:700}
.inspector .bar-head b{font-weight:600}
.bar-head .i{width:18px;height:18px;margin-right:5px}
.slot{height:26px;width:135px;margin:12px 2px 33px;border:2px solid #191b1d;border-radius:4px;background:#202326}
.splitter{margin:16px -14px 10px;padding:0 2px;height:3px;display:flex;flex:none;justify-content:center;background:linear-gradient(#686a6c,#686a6c) 0 0/100% 3px}
.splitter i{width:38px;background:repeating-linear-gradient(90deg,#fff 0 6px,#22262a 6px 9px)}
.msle{display:grid;grid-template-columns:1fr 1fr;width:130px;height:56px;margin:0 0 11px 4px;border:2px solid #16181a;border-radius:5px;background:#2e3236;font:800 17px/20px Inter,sans-serif;flex:none;color:#b8b8b8}
.msle button:nth-child(odd){border-right:1px solid #16181a}
.msle button:nth-child(-n+2){border-bottom:1px solid #16181a}
.msle .dim{color:#77797b}
.msle .i{width:18px;height:18px}
.panbox{width:128px;height:43px;margin:0 0 14px 5px;background:#1b1b1b;border:1px solid #151617;border-radius:5px;display:flex;flex-direction:column;align-items:center;flex:none;font:bold 14px/14px "Open Sans",sans-serif;color:#fff}
.panbox i{width:6px;height:23px;margin-top:2px;background:#eee}
.faders{flex:1;display:flex;gap:8px;margin-left:5px;width:128px;overflow:hidden;min-height:322px;max-height:322px}
.fader{position:relative;flex:1;background:#1b1b1b;border-radius:5px 5px 0 0;overflow:hidden}
.fader span{position:absolute;right:1px;width:34px;text-align:right;font-size:12px;line-height:14px;margin-top:-8px;color:#aaa;font-weight:600;background:linear-gradient(#777,#777) 0 9px/15px 1px no-repeat}
.meter span{left:4px;right:4px;width:auto;text-align:center;color:#4c4c4c;font-weight:400;background:linear-gradient(#666,#666) 0 9px/12px 1px no-repeat,linear-gradient(#666,#666) 100% 9px/12px 1px no-repeat}
input[type=range]{appearance:none;height:14px;outline:0}
.fader input[type=range]{position:absolute;left:7px;top:23px;width:28px;height:320px;writing-mode:vertical-lr;direction:rtl;background:linear-gradient(#000,#000) 12px 0/3px 100% no-repeat}
.fader input::-webkit-slider-thumb{appearance:none;width:28px;height:65px;border-radius:2px;background:linear-gradient(#808080 0 8px,#c0c0c0 8px 17px,#888 17px 18px,#c8c8c8 18px 25px,#888 25px 26px,#ccc 26px 31px,#222 31px 34px,#ddd 34px 40px,#999 40px 41px,#ddd 41px 48px,#999 48px 49px,#eee 49px 57px,#777 57px)}

.chip.wide{width:235px;display:flex;align-items:center}
.chip.wide b{flex:1}
.chip.wide>button{width:27px;font-size:10px}
.chip.wide .edit{width:29px;height:100%;background:#77797b;color:#ddd}
.chip .i{width:20px;height:20px}
.pads{display:flex;gap:6px;margin-top:12px;font:800 17px/20px Inter,sans-serif;color:#ddd;flex:none}
.pad{display:grid;gap:1px;background:#2e3032;border:1px solid #5c5e60;border-radius:4px;height:56px;overflow:hidden}
.pad button{background:#444649}
.pad .i{width:16px;height:16px}
.p2{grid-template-columns:1fr 1fr;width:77px}
.p4{grid-template-columns:repeat(4,1fr);width:150px}
.box{width:233px;border:2px solid #3c3f42;border-radius:4px;background:#181a1c;flex:none}
.box .i{width:18px;height:18px;color:#d0d0d0}
.box .i:has([href="#ramp"]),.box .i:has([href="#pan"]){height:12px}
.values{margin-top:19px;height:85px;font-size:14px}
.values div{height:27px;display:flex;align-items:center;padding:0 4px;gap:8px;border-bottom:1px solid #3c3f42}
.values div:last-child{border:0}
.values input{width:128px}
.values span{margin-left:auto;white-space:nowrap}
.values input::-webkit-slider-runnable-track{height:8px;border-radius:1px}
.blue::-webkit-slider-runnable-track{background:linear-gradient(90deg,#58aee8 75%,#3a3d40 75%)}
.flat::-webkit-slider-runnable-track{background:#35383a}
.values input::-webkit-slider-thumb{appearance:none;width:13px;height:13px;margin-top:-3px;border-radius:50%;background:#e8e8e8}
.preset{height:28px;margin-top:19px;display:flex;align-items:center;padding-left:4px;gap:8px;font-size:15px}
.preset em{flex:1;color:#85878a}
.preset button,.box .sel::after{font-size:9px;color:#999}
.preset button{width:28px;height:100%;border-left:1px solid #3c3f42}
.ext{height:29px;margin-top:18px;padding-left:5px;font-size:15px}
.box .sel{font-size:15px}
.ext .sel{height:100%}
.inspector .bar-head{width:237px;margin:20px 0 0 -2px}
.bus{height:56px;margin-top:13px}
.bus div{height:26px;display:flex;align-items:center;gap:6px;padding-left:4px}
.bus div+div{border-top:1px solid #3c3f42}
.bus select{font-size:15px}
.inspector .bar-head.last{margin-top:12px}

/* track list */
.tracks{position:relative;width:523px;flex:none;background:#22262a;border:2px solid #7c7e80;border-width:2px 3px 0 2px;border-radius:6px 0 0 0}
.tracks-head{height:44px;display:flex;align-items:center;justify-content:flex-end;padding:0 7px 0 0;margin-left:6px;border-bottom:2px solid #5f6163}
.tracks-head .group,.find,.count{height:28px}
.tracks-head .group button{width:37px}
.tracks-head .i{width:18px;height:18px}
.add{margin-right:auto}
.count{width:93px;background:#505255;border-radius:4px 0 0 4px;padding:4px 8px;font-size:15px;color:#c8c8c8}
.find{width:37px;background:#444649;border-radius:4px;margin-left:14px}
.rows{margin-left:6px;background:linear-gradient(#000,#000) 492px 0/17px 100% no-repeat}
.track{height:69px;display:flex;border-bottom:2px solid #17191b;width:492px}
.track.io{height:30px}
.tag{width:60px;flex:none;display:flex;justify-content:space-between;padding:7px 7px 0 5px;color:#222;font:17px/22px "Open Sans",sans-serif}
.io .tag{padding-top:5px}
.tag .i{width:24px;height:22px}
.c-gray{background:#5c5d5e}.c-cyan{background:#2fcccc}.c-lime{background:#d3ea4a}.c-pink{background:#e832b5}.c-red{background:#e63535}.c-violet{background:#a053e8}.c-gold{background:#e4b73d}.c-green{background:#34d998}.c-purple{background:#d040e4}
.ctl{flex:1;padding:3px 0 0 8px;min-width:0}
.l1,.l2{display:flex;align-items:center;height:28px}
.l2{margin-top:4px}
.ioname{padding-left:8px;font-size:17px;line-height:24px}
.name{width:221px;padding-left:14px;font:20px/24px "Liberation Sans","Noto Sans CJK JP",sans-serif;color:#dadada;white-space:nowrap;flex:none}
.tname{width:140px}
.l1 .group,.l2 .group,.vol{height:28px;background:#2e3236;border:2px solid #1a1c1e;border-radius:5px;color:#c0c0c0}
.ctl .group{font-size:17px}
.ctl .group .i,.sq .i{width:18px;height:18px}
.g74,.sp-ms,.sp-one{width:74px;flex:none}
.sp-one .group{width:37px;display:flex}
.ctl .group button{flex:1;width:auto}
.l2 .group,.g71{width:71px;margin-right:4px}
.l1 .name+.g71{margin:0 0 0 14px}
.pic{width:28px;height:28px;margin:0 54px 0 2px;border:2px solid #1d2022;border-radius:4px;flex:none}
.sp-pic{width:84px;flex:none}
.sp-g{width:75px;flex:none}
.name+.vol{margin-left:14px}
.vol{width:109px;display:flex;align-items:center;background:#202326;padding:0 7px 0 4px;gap:8px;flex:none}
.vol .i{width:18px;height:12px}
.vol input{width:68px}
.vol input::-webkit-slider-runnable-track{height:7px;background:linear-gradient(90deg,#b4b4b4 76%,#34373a 76%);border-radius:1px}
.vol input::-webkit-slider-thumb{appearance:none;width:12px;height:13px;margin-top:-3px;border-radius:50%;background:#d8d8d8}
.ctl .dim,.l2 .group.dim{color:#66686a}
.selected .ctl{background:#9b9c9b}
.selected .ctl .group,.selected .vol{background:#a3a4a3;border-color:#666;color:#222}
.selected .ctl .group.dim{color:#777}
.selected .name{color:#333}
.selected .pic{border-color:#808180}
.selected .vol input::-webkit-slider-runnable-track{background:linear-gradient(90deg,#222 76%,#868786 76%)}
.selected .vol input::-webkit-slider-thumb{background:#111;outline:2px solid #ccc}
.child{border-left:16px solid #e832b5}
.child .tag{border-left:1px solid #8a2070}
.child .vol{width:72px}
.child .vol input{width:32px}
.sq{width:33px;height:28px;border-radius:4px;margin-right:4px}
.ctl .lit{background:#dedede;color:#222}
.target{flex:1;height:28px;border:2px solid #1a1c1e;border-radius:4px;padding:2px 6px;font-size:15px;color:#b0b0b0}
.tval{display:flex;align-items:center;margin-left:33px;height:28px;flex:1;border:2px solid #1a1c1e;border-right:0;border-radius:4px 0 0 4px;background:#202326}
.tval button{width:36px;height:100%;background:#2e3236}
.tval span{flex:1;text-align:right;padding-right:9px;font-size:15px}
.tval .i{width:17px;height:17px}
.tval .sp{width:9px;height:18px;margin-right:36px}
.l2.end{padding-left:284px}
.tval.low{margin-left:0}
.grabber{position:absolute;right:-3px;top:505px;width:3px;height:40px;background:repeating-linear-gradient(#fff 0 6px,#222 6px 9px)}

/* timeline */
.timeline{flex:1;min-width:0;border-top:2px solid #7c7e80;background:#1d2022;padding:6px 0 0 12px;display:flex;flex-direction:column}
.ruler{height:38px;background:linear-gradient(135deg,#fff 12px,transparent 12px) no-repeat,repeating-linear-gradient(90deg,#e0dcff 0 1px,transparent 1px 67px) 31px 0,linear-gradient(#e0dcff,#e0dcff) 14px 0/1px 100% no-repeat,#7459e4;border-left:2px solid #fff;display:flex;padding:15px 0 0 5px;color:#fff;overflow:hidden;flex:none}
.ruler b{width:67px;flex:none;font-weight:600}
.ruler .b1{width:15px}.ruler .b2{width:17px}
.lanes{flex:1;border-left:2px solid #fff;background:linear-gradient(#98999a,#98999a) 14px 0/1px 100% no-repeat,repeating-linear-gradient(90deg,#98999a 0 1px,#434547 1px 67px) 31px 0}
.lane{height:69px;border-bottom:2px solid #56585a;position:relative;padding-top:3px}
.lane.io{height:30px}
.sig{position:absolute;top:2px;left:0;width:70px;height:28px;background:#2fcccc;clip-path:polygon(0 0,100% 0,62% 100%,0 100%);color:#0a2a2a;font:bold 16px/25px "Liberation Sans",sans-serif;padding-left:8px;border-top:1px solid #8ff}
.sig i{font-size:14px;font-weight:400}
.s2{top:32px;left:32px}
.event{position:relative;height:63px;overflow:hidden;border:2px solid;border-width:2px 0}
.event span{position:absolute;left:0;top:0;padding:3px 4px 5px 5px;font:bold 16px/20px "Liberation Sans",sans-serif;white-space:nowrap;z-index:1}
.event svg{display:block;position:relative;width:100%;height:60px}
.event::before{content:"";position:absolute;inset:0;background:repeating-linear-gradient(90deg,var(--g) 0 1px,transparent 1px 67px) 31px 0,linear-gradient(var(--g),var(--g)) 14px 0/1px 100% no-repeat}
.red{--g:#a82626;background:#bd3a3a;border-color:#e86060;color:#5c0c0c}
.red span{background:#db3636;color:#ffd8d8}
.violet{--g:#6f35c0;background:#8a52c2;border-color:#b880ee;color:#400f88}
.violet span{background:#9853dc;color:#140828}
.muted{--g:#5d7893;background:#4c6179;border-color:#8797a8;color:#90a060}
.muted span{background:#4e6881;color:#8b9aa8}
.original{--g:#4a4b2c;background:#2b2c1c;border-color:#a5ad40;color:#d3ea4a}
.original span{background:#22231a;color:#fff}
.folder{--g:transparent;border-color:#f060c8;background:linear-gradient(#e832b5 0 2px,#e63535 4px 12px,#a053e8 15px 25px,#e63535 29px 39px,#a053e8 43px 54px,#e832b5 57px)}
.folder span{background:linear-gradient(#e832a0,#d43cc8);color:#1a0518;padding-bottom:3px}
.chords{background:linear-gradient(rgba(62,110,90,.7),rgba(62,110,90,.7)) 0 45px/100% 24px no-repeat}
.chord{position:absolute;top:3px;height:26px;background:#35b583;border:2px solid #4fe0a8;outline:1px solid #176245;color:#134534;overflow:hidden;white-space:nowrap;font:15px/21px "Open Sans","Noto Sans CJK JP",sans-serif}
.chord i{font:13px/16px "DejaVu Sans",sans-serif}
.chord sup{font-size:12px;line-height:10px}
.chord svg{position:absolute;right:0;top:3px;width:9px;height:10px}
.chord.scale{top:45px;height:23px;font-size:13px;line-height:18px;padding-left:2px}
#tempoline{display:block;width:100%;height:66px;margin-top:-3px}

/* Audio menu */
.dropdown{position:absolute;left:90px;top:75px;width:453px;background:#f1f1f1;border:1px solid #fafafa;padding:2px 3px 5px;box-shadow:3px 3px 5px #0009;color:#111}
.dropdown button{width:100%;height:33px;padding-left:49px;justify-content:flex-start;position:relative}
.dropdown :disabled{color:#8a8a8a}
.dropdown .on{background:#91c9f7}
.dropdown kbd{margin-left:auto;margin-right:26px;font:inherit}
.dropdown .sub::after{content:"";width:7px;height:7px;margin:0 17px 0 auto;border:solid #333;border-width:2px 2px 0 0;transform:rotate(45deg)}
.dropdown hr{height:10px;border:0;margin:0 2px 0 42px;background:linear-gradient(#d4d4d4,#d4d4d4) 0 4px/100% 1px no-repeat}

/* dialogs */
.dialog{position:absolute;border:6px solid #fff;background:#1d2022;display:flex;flex-direction:column}
.dialog header{height:47px;background:#000;display:flex;align-items:center;justify-content:space-between;padding:0 2px 0 12px;color:#eee;flex:none}
.stems{left:422px;top:488px;width:698px}
.close{width:29px;height:29px;background:#c8504f;color:#fff;font-weight:700;font-size:14px}
.stems-body{margin:6px 7px;height:610px;border:2px solid #373a3d;border-radius:10px;background:#22262a;padding:32px 33px 0 32px;display:flex;flex-direction:column}
.field{height:53px;background:#2b2e31;border-radius:3px;display:flex;align-items:center;padding-left:16px;font-size:17px}
.field b{width:147px;font-weight:500}
.list{background:#1a1c1d;border-radius:8px;padding:7px 8px 8px 7px;margin-top:34px;display:grid;gap:7px}
.list label{height:53px;background:#202224;border-radius:4px;display:flex;align-items:center;padding-left:23px;color:#bbb}
.list .i{width:26px;height:24px;margin-right:26px;color:#d8d8d8}
input[type=checkbox]{appearance:none;width:26px;height:26px;border:3px solid #c8c8c8;margin-right:15px;display:grid;place-items:center}
input[type=checkbox]:checked::after{content:"";width:8px;height:14px;border:solid #e8e8e8;border-width:0 3px 3px 0;transform:rotate(36deg);margin-top:-4px}
.opts{padding:40px 5px 0;display:grid;gap:19px;font-size:17px}
.opts label{display:flex;align-items:center;color:#c4c4c4}
.opts .off{color:#66686a}
.off input[type=checkbox]{border-color:#66686a}
.stems hr{height:2px;border:0;background:#4a4c4e;margin-top:32px;flex:none}
.go{width:375px;height:38px;margin:24px 0 0 auto;background:#444649;border:1px solid #5c5e60;border-radius:4px;font-size:17px}
.busy{left:838px;top:754px;width:615px;background:#a9b5c2;color:#111;border-radius:4px}
.busy-body{height:211px;padding:74px 10px 0;display:flex;flex-direction:column;border:solid #444;border-width:0 1px 1px}
.bar{position:relative;height:38px}
progress{appearance:none;display:block;width:100%;height:38px;background:#000;border:0;padding:3px}
progress::-webkit-progress-bar{background:#000}
progress::-webkit-progress-value{background:linear-gradient(#b8d0ea,#9dbbdc)}
.bar span{position:absolute;inset:8px 0 auto;text-align:center;color:#fff;font-weight:700;font-size:16px}
.busy p{margin:21px 0 14px;font-size:17px;font-feature-settings:normal}
.busy-body button{width:149px;height:34px;margin-left:auto;border:3px solid #1a72c0;outline:1px solid #bfe0f8;background:#e4e4e4;flex:none}

/* step callouts */
.notes{position:absolute;left:0;top:0;width:100%;height:100%;pointer-events:none}
.notes path,.notes ellipse{fill:#ffc000;stroke:#41719c;stroke-width:2}
.notes .flow{fill:#d9d9d9;stroke:none}
.notes text{font:500 84px Lato,sans-serif;text-anchor:middle;fill:#000}
.frame{position:absolute;border:2px solid #ffc000}
.f3{left:448px;top:680px;width:248px;height:371px}
.f5{left:421px;top:1616px;width:1206px;height:388px;border-width:6px}
.f6{left:553px;top:1697px;width:81px;height:267px}
```
FILE: app.js
```js
// Both windows share the same bars and inspector.
document.querySelectorAll('[data-copy]').forEach(function (slot) {
  slot.replaceWith(document.querySelector('.result .' + slot.dataset.copy).cloneNode(true));
});

function icon(name) { return '<svg class="i"><use href="#' + name + '"/></svg>'; }

document.querySelectorAll('.child').forEach(function (t) {
  var d = t.dataset;
  t.innerHTML = '<div class="tag ' + d.color + '">' + icon('wave') + d.no + '</div><div class="ctl">' +
    '<div class="l1"><div class="group g74"><button>M</button><button>S</button></div><span class="name">' + d.name +
    '</span><div class="vol">' + icon('ramp') + '<input type="range" value="76" aria-label="音量"></div></div>' +
    '<div class="l2"><span class="pic"></span><div class="group dim"><button aria-label="録音">' + icon('rec') +
    '</button><button aria-label="モニター">' + icon('mon') + '</button></div><div class="group"><button>R</button><button>W</button></div>' +
    '<div class="group"><button aria-label="編集">' + icon('e') + '</button><button aria-label="チャンネル構成">' + icon('rings') + '</button></div></div></div>';
});

// Repeatable noise so that the waveforms look the same on each load.
var seed = 7;
function rnd() { seed = (seed * 16807) % 2147483647; return seed / 2147483647; }

var LENGTH = 2400;
var envelopes = {
  full: function (x) { return x < 32 ? 0.6 : x < 166 ? 2 + 4 * rnd() * Math.exp(-((x - 32) % 67) / 40) + rnd() : 4 + 4 * rnd(); },
  vocals: function (x) { return (x > 277 && x < 418) || (x > 520 && x < 545) || (x > 655 && x < 725) ? 1 + rnd() : 0.6; },
  drums: function (x) { if (x < 233) return 0.6; var p = x % 17; return p < 8 ? 1 + 6 * (1 - Math.abs(p - 4) / 4) * (0.4 + 0.6 * rnd()) : 1 + rnd(); },
  bass: function (x) { return x < 160 ? 0.6 : 1 + 1.5 * Math.abs(Math.sin(x / 45)) + 1.5 * rnd(); },
  other: function (x) { return x < 32 ? 0.6 : (x < 166 ? 3 : 4) + 3 * rnd(); }
};

function band(cy, from, env) {
  var top = '', bottom = '';
  for (var x = from; x < LENGTH; x += 2) {
    var a = env(x);
    top += (top ? 'L' : 'M') + x + ' ' + (cy - a).toFixed(1);
    bottom = 'L' + x + ' ' + (cy + a).toFixed(1) + bottom;
  }
  return '<path fill="currentColor" d="' + top + bottom + 'Z"/>';
}
function outline(cy, from) {
  var html = '';
  [-1, 1].forEach(function (s) {
    var d = '';
    for (var x = from; x < LENGTH; x += 3) {
      var a = (x < 166 ? 2 : x < 240 ? 4 : 6) + 3 * rnd();
      d += (d ? 'L' : 'M') + x + ' ' + (cy + s * a).toFixed(1);
    }
    html += '<path fill="none" stroke="currentColor" stroke-width="1.500" d="' + d + '"/>';
  });
  return html;
}
document.querySelectorAll('[data-wave]').forEach(function (svg) {
  var kind = svg.dataset.wave, from = +svg.dataset.from;
  if (kind === 'outline') svg.innerHTML = outline(15, from) + outline(45, 32);
  else svg.innerHTML = band(16, from, envelopes[kind]) + band(46, 0, envelopes[kind]);
  var fade = { vocals: '#ffc8c8', bass: '#ffc8c8', drums: '#1c0838', other: '#1c0838', full: '#c8ccb0', outline: '#8292a4' }[kind];
  svg.innerHTML += '<path fill="' + fade + '" d="M20 51 33 42v9z"/>';
});

// Chord events: left edge, width, root, suffix, extension.
var chords = [
  [28, 60, 'F', 'min', '7'], [166, 34, 'D♭', '', ''], [202, 34, 'E♭', 'sus', ''], [236, 33, 'A♭', '', ''],
  [299, 60, 'F', 'min', '7'], [368, 52, 'C', 'min', ''], [436, 31, 'D♭', '', ''], [467, 32, 'E♭', '', ''],
  [502, 32, 'A♭', '', ''], [570, 51, 'F', 'min', ''], [638, 53, 'C', 'min', ''], [703, 33, 'D♭', '', '6'], [738, 34, 'E♭', '', '7']
];
document.getElementById('chords').innerHTML = chords.map(function (c) {
  var mark = c[3] === 'sus' || (c[4] && !c[3]) ? '' : '<svg><use href="#ped"/></svg>';
  return '<span class="chord" style="left:' + (c[0] - 1) + 'px;width:' + c[1] + 'px">' + c[2].replace('♭', '<i>♭</i>') + c[3] +
    (c[4] ? '<sup>' + c[4] + '</sup>' : '') + mark + '</span>';
}).join('') + '<span class="chord scale" style="left:27px;width:85px">A# ブルース 1</span>';

// Tempo curve: one step for each quarter of a bar pair.
var steps = [35,33,27,32,32,32,33,30,29,32,33,29,33,32,32,32,33,30,32,32,30,33,33,29,33,30,38,26,30,33,32,35,27,29,33,33,29,35,32,30,33,35,33,29,30];
var path = 'M14 0', marks = '';
steps.forEach(function (y, n) {
  var x = Math.round(14 + n * 16.7);
  path += 'V' + y + 'H' + Math.round(14 + (n + 1) * 16.7);
  marks += '<path fill="#fff" d="M' + (x - 1) + ' ' + (y - 2) + 'h3v4h-3z"/>';
});
document.getElementById('tempoline').innerHTML = '<path d="' + path + '" fill="none" stroke="#8a2a9c" stroke-width="2"/>' + marks;
```
